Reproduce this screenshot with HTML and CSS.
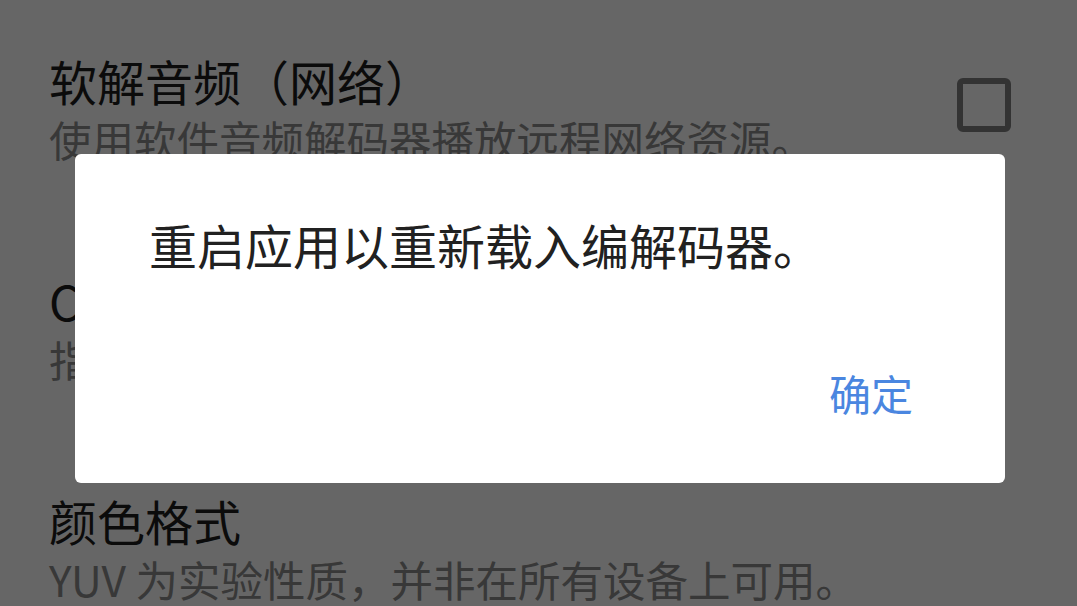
FILE: index.html
```html
<!DOCTYPE html>
<html lang="zh-CN">
  <head>
    <meta charset="UTF-8" />
    <meta name="viewport" content="width=device-width, initial-scale=1.0" />
    <title>设置</title>
    <link rel="stylesheet" href="styles.css">
  </head>
  <body>
    <div class="settings">
      <div class="pref">
        <div class="pref-text">
          <p class="pref-title">软解音频（网络）</p>
          <p class="pref-summary">使用软件音频解码器播放远程网络资源。</p>
        </div>
        <span class="checkbox"></span>
      </div>

      <div class="pref">
        <div class="pref-text">
          <p class="pref-title">Codec 优先级</p>
          <p class="pref-summary">指定解码器的优先顺序。</p>
        </div>
      </div>

      <div class="pref">
        <div class="pref-text">
          <p class="pref-title">颜色格式</p>
          <p class="pref-summary">YUV 为实验性质，并非在所有设备上可用。</p>
        </div>
      </div>
    </div>

    <div class="scrim">
      <div class="dialog">
        <p class="dialog-message">重启应用以重新载入编解码器。</p>
        <div class="dialog-actions">
          <button class="dialog-btn">确定</button>
        </div>
      </div>
    </div>
  </body>
</html>
```

FILE: styles.css
```css
body {
  margin: 0;
  font-family: "Noto Sans CJK SC", "Noto Sans", sans-serif;
  background-color: #fff;
  overflow: hidden;
}

.settings {
  padding-top: 20px;
}

.pref {
  display: flex;
  align-items: flex-start;
  height: 220px;
  box-sizing: border-box;
  padding: 30px 66px 0 49px;
}

.pref-text {
  flex: 1;
}

.pref-title {
  margin: 0;
  font-size: 48px;
  line-height: 60px;
  color: #1c1c1c;
}

.pref-summary {
  margin: 3px 0 0;
  font-size: 42.5px;
  line-height: 52px;
  color: #8c8c8c;
}

.checkbox {
  width: 42px;
  height: 42px;
  margin-top: 28px;
  border: 6px solid #7f7f7f;
  border-radius: 6px;
}

.scrim {
  position: fixed;
  inset: 0;
  background: rgba(0, 0, 0, 0.6);
  padding: 154px 0 0 75px;
}

.dialog {
  width: 930px;
  box-sizing: border-box;
  background: #fff;
  border-radius: 6px;
  padding: 60px 92px 62px 74px;
}

.dialog-message {
  margin: 0;
  font-size: 48px;
  line-height: 60px;
  color: #212121;
}

.dialog-actions {
  display: flex;
  justify-content: flex-end;
  margin-top: 91px;
}

.dialog-btn {
  padding: 0;
  border: none;
  background: none;
  font-family: inherit;
  font-size: 42px;
  line-height: 56px;
  color: #4a86e0;
  cursor: pointer;
}
```
